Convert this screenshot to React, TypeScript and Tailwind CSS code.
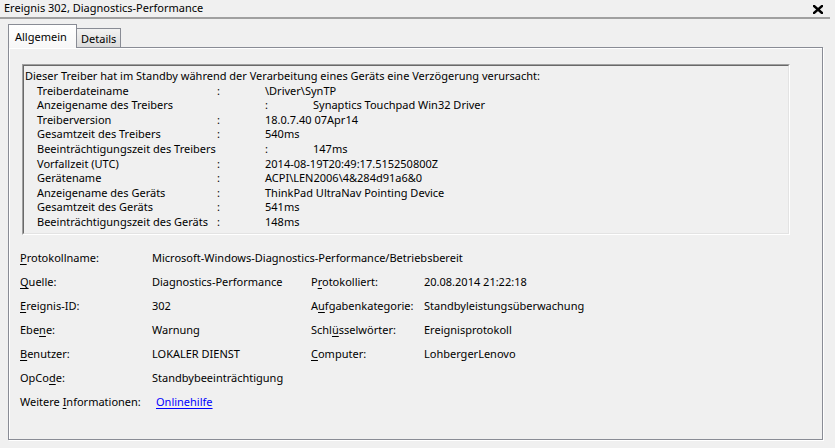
import React from 'react';

const font = { fontFamily: '"Noto Sans", "Open Sans", sans-serif' };

interface DetailLine {
  label: string;
  value: string;
  far?: boolean; // Doppelpunkt eine Tab-Stelle weiter rechts
}

const detailLines: DetailLine[] = [
  { label: 'Treiberdateiname', value: '\\Driver\\SynTP' },
  { label: 'Anzeigename des Treibers', value: 'Synaptics Touchpad Win32 Driver', far: true },
  { label: 'Treiberversion', value: '18.0.7.40 07Apr14' },
  { label: 'Gesamtzeit des Treibers', value: '540ms' },
  { label: 'Beeinträchtigungszeit des Treibers', value: '147ms', far: true },
  { label: 'Vorfallzeit (UTC)', value: '2014-08-19T20:49:17.515250800Z' },
  { label: 'Gerätename', value: 'ACPI\\LEN2006\\4&284d91a6&0' },
  { label: 'Anzeigename des Geräts', value: 'ThinkPad UltraNav Pointing Device' },
  { label: 'Gesamtzeit des Geräts', value: '541ms' },
  { label: 'Beeinträchtigungszeit des Geräts', value: '148ms' },
];

// Beschriftung mit unterstrichener Zugriffstaste
function Label({ pre, key_, post }: { pre: string; key_: string; post: string }) {
  return (
    <span>
      {pre}
      <u className="underline-offset-2">{key_}</u>
      {post}
    </span>
  );
}

export default function App() {
  return (
    <div className="w-[835px] h-[448px] bg-[#f0f0f0] overflow-hidden text-black text-[11px]" style={font}>
      {/* Titelzeile */}
      <div className="h-[17px] flex items-center justify-between pl-[4px] pr-[12px]">
        <span className="text-[11px] leading-none pb-[2px]">Ereignis 302, Diagnostics-Performance</span>
        <svg width="10" height="9" viewBox="0 0 10 9" className="mt-[1px]">
          <path d="M1 1 L9 8 M9 1 L1 8" stroke="black" strokeWidth="2.4" strokeLinecap="square" />
        </svg>
      </div>
      <div className="h-[2px] w-[830px] bg-[#a0a0a0]" />

      <div className="pl-[8px] pt-[5px]">
        {/* Reiter */}
        <div className="flex items-end h-[23px]">
          <div className="relative z-10 h-[24px] -mb-px w-[69px] border-l border-t border-r border-[#898c95] bg-gradient-to-b from-white to-[#f7f7f7] pl-[6px] pt-[5px] leading-[14px]">
            Allgemein
          </div>
          <div className="h-[19px] w-[44px] border-t border-r border-[#898c95] bg-gradient-to-b from-[#f2f2f2] to-[#dcdcdc] pl-[4px] pt-[3px] leading-[14px]">
            Details
          </div>
        </div>

        {/* Seite */}
        <div className="w-[815px] h-[393px] border border-[#898c95] shadow-[1px_1px_0_#ffffff]">
          <div className="h-full border-l border-t border-white pt-[15px] pl-[12px]">
            {/* Beschreibung */}
            <div className="w-[768px] h-[171px] border-t border-l border-[#a0a0a0] border-b border-r border-b-white border-r-white">
              <div className="h-full border-t border-l border-[#696969] border-b border-r border-b-[#e3e3e3] border-r-[#e3e3e3] pl-[1px] pt-[3px] leading-[14.6px] whitespace-nowrap">
                <div>Dieser Treiber hat im Standby während der Verarbeitung eines Geräts eine Verzögerung verursacht:</div>
                {detailLines.map((l) => (
                  <div key={l.label} className="flex">
                    <span className={l.far ? 'w-[240px] pl-[12px]' : 'w-[192px] pl-[12px]'}>{l.label}</span>
                    <span className="w-[48px]">:</span>
                    <span>{l.value}</span>
                  </div>
                ))}
              </div>
            </div>

            {/* Eigenschaften */}
            <div className="ml-[-2px] mt-[11px] grid grid-cols-[132px_159px_113px_1fr] auto-rows-[24px] items-center whitespace-nowrap">
              <Label pre="" key_="P" post="rotokollname:" />
              <span className="col-span-3">Microsoft-Windows-Diagnostics-Performance/Betriebsbereit</span>

              <Label pre="" key_="Q" post="uelle:" />
              <span>Diagnostics-Performance</span>
              <Label pre="P" key_="r" post="otokolliert:" />
              <span>20.08.2014 21:22:18</span>

              <Label pre="" key_="E" post="reignis-ID:" />
              <span>302</span>
              <Label pre="A" key_="u" post="fgabenkategorie:" />
              <span>Standbyleistungsüberwachung</span>

              <Label pre="Ebe" key_="n" post="e:" />
              <span>Warnung</span>
              <Label pre="Schl" key_="ü" post="sselwörter:" />
              <span>Ereignisprotokoll</span>

              <Label pre="" key_="B" post="enutzer:" />
              <span>LOKALER DIENST</span>
              <Label pre="" key_="C" post="omputer:" />
              <span>LohbergerLenovo</span>

              <Label pre="OpCo" key_="d" post="e:" />
              <span className="col-span-3">Standbybeeinträchtigung</span>

              <Label pre="Weitere " key_="I" post="nformationen:" />
              <span className="col-span-3 pl-[4px]">
                <a href="#" className="text-[#0000ff] underline underline-offset-2">Onlinehilfe</a>
              </span>
            </div>
          </div>
        </div>
      </div>
    </div>
  );
}
